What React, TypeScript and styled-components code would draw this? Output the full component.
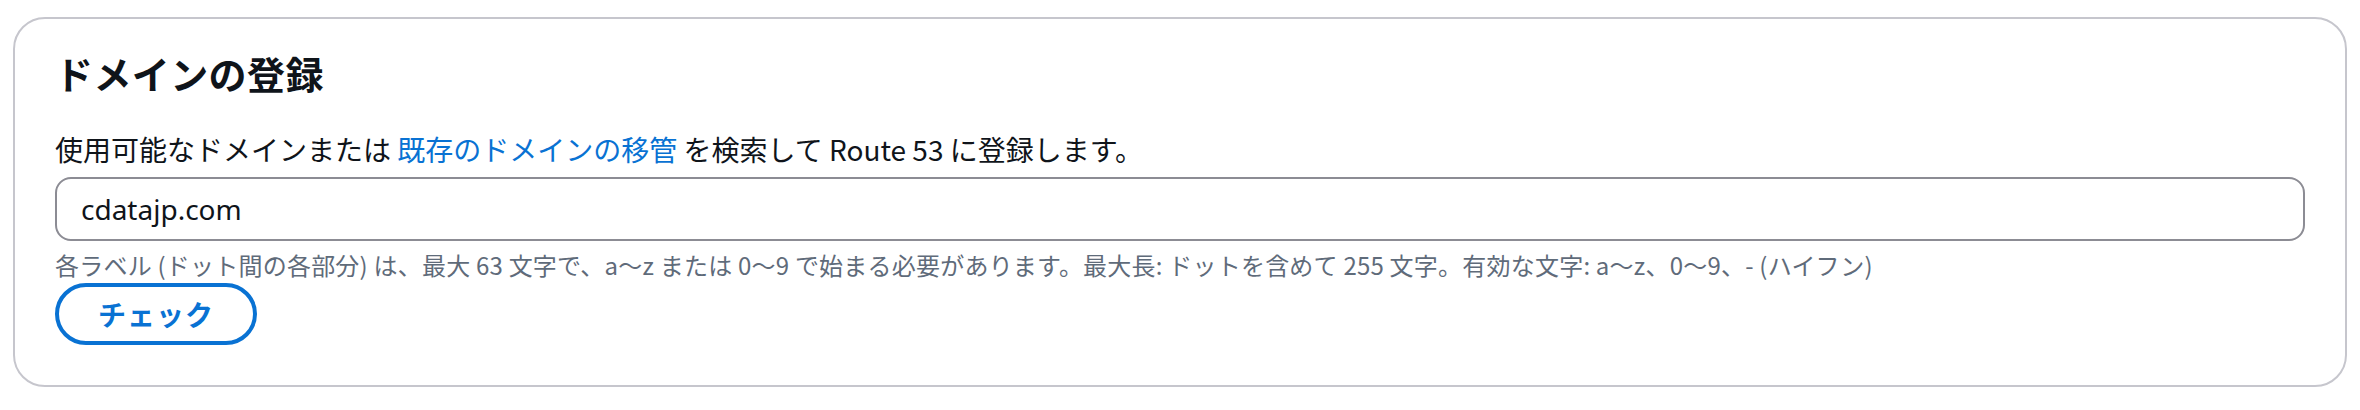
import styled, { createGlobalStyle } from "styled-components";

const GlobalStyle = createGlobalStyle`
  body {
    margin: 0;
    background: #ffffff;
    font-family: "Noto Sans", "Noto Sans CJK JP", sans-serif;
    color: #0f141a;
  }
`;

const Page = styled.div`
  padding: 17px 13px 0 13px;
`;

const Card = styled.section`
  border: 2px solid #c6c6cd;
  border-radius: 32px;
  background: #ffffff;
  padding: 30px 40px 40px 40px;
  display: flex;
  flex-direction: column;
  align-items: flex-start;
`;

const Title = styled.h2`
  margin: 0;
  font-family: "Noto Sans CJK JP", sans-serif;
  font-size: 38px;
  line-height: 48px;
  font-weight: 700;
  letter-spacing: 0.4px;
  color: #0f141a;
`;

const Description = styled.p`
  margin: 32px 0 0 0;
  font-family: "Noto Sans CJK JP", sans-serif;
  font-size: 28px;
  line-height: 40px;
  color: #0f141a;
`;

const Link = styled.a`
  color: #0972d3;
  text-decoration: none;
`;

const Input = styled.input`
  box-sizing: border-box;
  margin-top: 8px;
  width: 100%;
  height: 64px;
  border: 2px solid #8c8c94;
  border-radius: 16px;
  padding: 0 24px;
  font-family: "Noto Sans", "Noto Sans CJK JP", sans-serif;
  font-size: 28px;
  color: #0f141a;
  background: #ffffff;
  outline: none;
`;

const Hint = styled.p`
  margin: 8px 0 0 0;
  font-family: "Noto Sans CJK JP", sans-serif;
  font-size: 24px;
  line-height: 32px;
  letter-spacing: 0.22px;
  color: #5f6b7a;
`;

const Button = styled.button<{ $variant?: "normal" | "primary" }>`
  box-sizing: border-box;
  margin-top: 2px;
  width: 202px;
  height: 62px;
  border-radius: 31px;
  border: 4px solid #0972d3;
  background: ${(p) => (p.$variant === "primary" ? "#0972d3" : "#ffffff")};
  color: ${(p) => (p.$variant === "primary" ? "#ffffff" : "#0972d3")};
  font-family: "Noto Sans CJK JP", sans-serif;
  font-size: 28px;
  font-weight: 700;
  letter-spacing: 1px;
  cursor: pointer;
`;

const App = () => {
  return (
    <Page>
      <GlobalStyle />
      <Card>
        <Title>ドメインの登録</Title>
        <Description>
          使用可能なドメインまたは <Link href="#">既存のドメインの移管</Link>{" "}
          を検索して Route 53 に登録します。
        </Description>
        <Input defaultValue="cdatajp.com" />
        <Hint>
          各ラベル (ドット間の各部分) は、最大 63 文字で、a〜z または 0〜9
          で始まる必要があります。最大長: ドットを含めて 255 文字。有効な文字:
          a〜z、0〜9、- (ハイフン)
        </Hint>
        <Button $variant="normal">チェック</Button>
      </Card>
    </Page>
  );
};

export default App;
